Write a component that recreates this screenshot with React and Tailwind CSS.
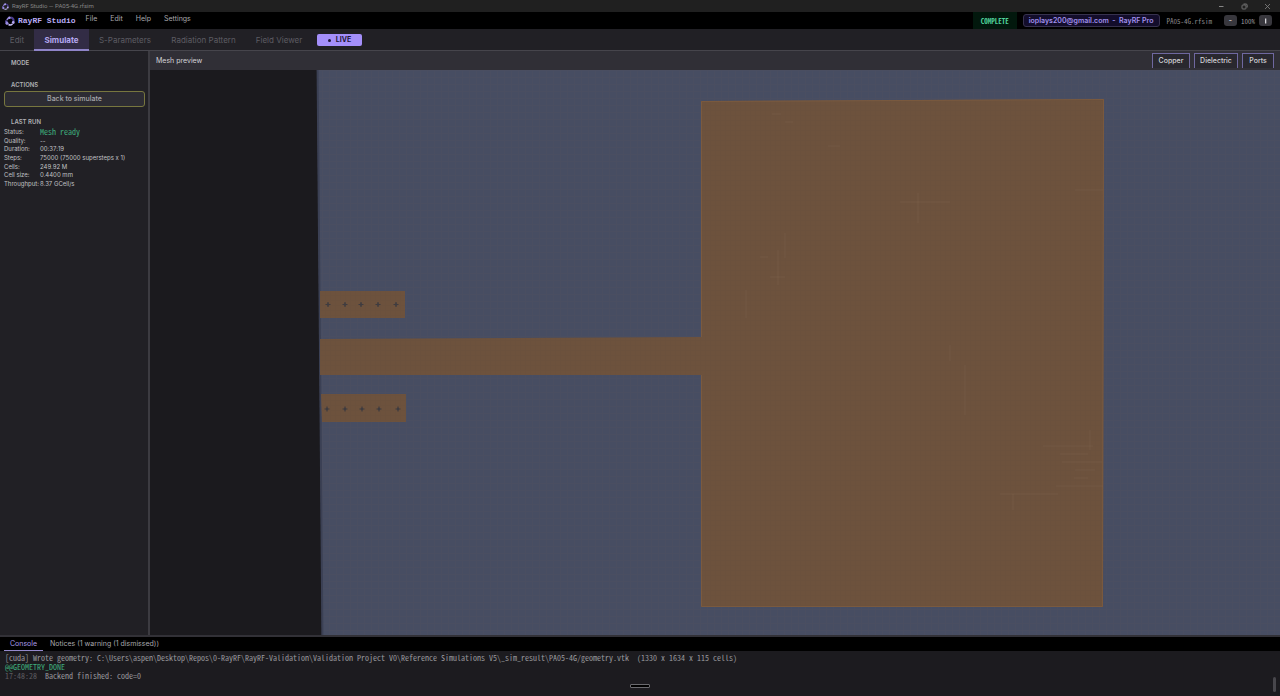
import { useState } from "react"

const menus = ["File", "Edit", "Help", "Settings"]

const lastRun = [
    ["Quality:", "--"],
    ["Duration:", "00:37:19"],
    ["Steps:", "75000 (75000 supersteps x 1)"],
    ["Cells:", "249.92 M"],
    ["Cell size:", "0.4400 mm"],
    ["Throughput:", "8.37 GCell/s"],
]

const upperVias = [328, 345, 361, 378, 396]
const lowerVias = [327, 345, 362, 379, 398]

function Logo({ className }) {
    return (
        <svg viewBox="0 0 20 20" className={className} fill="none">
            <path d="M4 8a7 7 0 0 1 6-5" stroke="#8b7fd0" strokeWidth="3.500" />
            <path d="M12 3a7 7 0 0 1 5 8" stroke="#4b3b8f" strokeWidth="4" />
            <path d="M15 16a7 7 0 0 1-8 1" stroke="#c9c0f5" strokeWidth="3" />
            <path d="M5 16a7 7 0 0 1-2-7" stroke="#6a5cb8" strokeWidth="4.500" />
            <circle cx="16.500" cy="13" r="2.800" fill="#b3a6f2" />
            <circle cx="4" cy="14.500" r="3" fill="#9a8ce0" />
            <circle cx="9" cy="3.500" r="2.600" fill="#a99bf0" />
        </svg>
    )
}

function TitleBar() {
    return (
        <div className="flex h-3 shrink-0 items-center justify-between bg-[#202020] pl-[2px] pr-[9px] text-[#858585]">
            <div className="flex items-center gap-[3px]">
                <Logo className="size-[7px]" />
                <span className="font-['Roboto',sans-serif] text-[6px] leading-[12px]">RayRF Studio — PA05-4G.rfsim</span>
            </div>
            <div className="flex items-center gap-4">
                <button aria-label="Minimize">
                    <svg viewBox="0 0 7 7" className="size-[7px]" stroke="currentColor"><path d="M1 3.500h4.500" /></svg>
                </button>
                <button aria-label="Restore">
                    <svg viewBox="0 0 7 7" className="size-[7px]" fill="none" stroke="currentColor" strokeWidth="0.800">
                        <rect x="1" y="2" width="4" height="4" rx="0.800" />
                        <path d="M2.500 1h2.500a1.200 1.200 0 0 1 1.200 1.200v2.300" />
                    </svg>
                </button>
                <button aria-label="Close">
                    <svg viewBox="0 0 7 7" className="size-[7px]" stroke="currentColor" strokeWidth="0.800"><path d="M1 1l5 5M6 1l-5 5" /></svg>
                </button>
            </div>
        </div>
    )
}

function MenuBar({ zoom, setZoom }) {
    return (
        <div className="flex h-[17px] shrink-0 items-center bg-black pl-[5px] pr-2">
            <Logo className="size-[10px]" />
            <h1 className="ml-[3px] font-['Liberation_Mono',monospace] text-[8px] font-bold leading-[12px] text-[#b9acf5]">RayRF Studio</h1>
            <nav className="ml-[10px] flex gap-[13px] pb-[3px]">
                {menus.map((m) => (
                    <button key={m} className="text-[7px] leading-[12px] text-[#a8a8ac]">{m}</button>
                ))}
            </nav>
            <div className="ml-auto flex h-full items-center">
                <span className="flex h-full items-center bg-[#02180d] px-2 font-['Noto_Sans_Mono_CJK_SC','Liberation_Mono',monospace] text-[7px] font-bold leading-[12px] text-[#4fd09a]">COMPLETE</span>
                <button className="ml-[6px] h-[13px] rounded-[3px] border border-[#37324e] bg-[#130d2b] px-[5px] text-[7px] font-semibold leading-[11px] text-[#a291ee]">
                    ioplays200@gmail.com &nbsp;-&nbsp; RayRF Pro
                </button>
                <span className="ml-[7px] font-['Noto_Sans_Mono_CJK_SC','Liberation_Mono',monospace] text-[7px] leading-[12px] text-[#8a8a8e]">PA05-4G.rfsim</span>
                <button aria-label="Zoom out" onClick={() => setZoom(zoom - 10)} className="ml-3 h-[11px] w-[13px] rounded-[3px] bg-[#38373d] text-[7px] font-bold leading-[11px] text-[#c8c8cc]">-</button>
                <span className="mx-1 font-['Noto_Sans_Mono_CJK_SC','Liberation_Mono',monospace] text-[7px] leading-[12px] text-[#9a9a9e]">{zoom}%</span>
                <button aria-label="Zoom in" onClick={() => setZoom(zoom + 10)} className="flex h-[11px] w-[13px] items-center justify-center rounded-[3px] bg-[#38373d] text-[#d8d8dc]">
                    <svg viewBox="0 0 5 7" className="h-[7px] w-[5px]" fill="currentColor"><path d="M2 1.500h1.300v5h-1.300z" /></svg>
                </button>
            </div>
        </div>
    )
}

function TabBar() {
    return (
        <div className="flex h-[22px] shrink-0 border-b border-[#46454c] bg-[#212025] text-[8px] leading-[22px] text-[#5d5c63]">
            <button className="w-[34px]">Edit</button>
            <button className="-mb-px w-[55px] border-b-2 border-[#8f84c8] bg-[#322c45] font-bold leading-[22px] text-[#b5a8f0]">Simulate</button>
            <button className="w-[72px]">S-Parameters</button>
            <button className="w-[85px]">Radiation Pattern</button>
            <button className="w-[66px]">Field Viewer</button>
            <button className="ml-[5px] mt-[5px] flex h-3 w-[45px] items-center justify-center gap-[5px] rounded-[2px] bg-[#a48ffa] text-[7px] font-bold leading-[12px] text-[#1d1638]">
                <span className="size-[3px] rounded-full bg-[#1d1638]" />
                LIVE
            </button>
        </div>
    )
}

function Sidebar() {
    return (
        <aside className="w-[150px] shrink-0 border-r-2 border-[#3c3b41] bg-[#212025] px-1 text-[#c0c0c4]">
            <h2 className="pl-[7px] pt-[6px] text-[6px] font-semibold leading-[12px] text-[#b0b0b4]">MODE</h2>
            <h2 className="pl-[7px] pt-[10px] text-[6px] font-semibold leading-[12px] text-[#b0b0b4]">ACTIONS</h2>
            <button className="block h-4 w-[141px] rounded-[3px] border border-[#77763f] bg-[#2d2c33] text-[7px] font-medium leading-[14px] text-[#a8a8ac]">Back to simulate</button>
            <h2 className="pl-[7px] pt-[9px] text-[6px] font-semibold leading-[12px] text-[#b0b0b4]">LAST RUN</h2>
            <dl className="grid h-[60px] grid-cols-[36px_1fr] items-center text-[6px] leading-[8px]">
                <dt>Status:</dt>
                <dd className="font-['Noto_Sans_Mono_CJK_SC','Liberation_Mono',monospace] text-[8px] leading-[8px] text-[#3fae7d]">Mesh ready</dd>
                {lastRun.map(([label, value]) => (
                    <div key={label} className="contents">
                        <dt className="whitespace-nowrap">{label}</dt>
                        <dd className="whitespace-nowrap">{value}</dd>
                    </div>
                ))}
            </dl>
        </aside>
    )
}

function Vias({ xs, y }) {
    return xs.map((x) => (
        <g key={x} stroke="#3f3c40" strokeWidth="1.200">
            <path d={`M${x - 2.5} ${y}h5M${x} ${y - 2.5}v5`} />
            <circle cx={x} cy={y} r="1.200" fill="#3f3c40" stroke="none" />
        </g>
    ))
}

function MeshView() {
    return (
        <svg viewBox="150 70 1130 565" preserveAspectRatio="xMidYMid slice" className="min-h-0 w-full flex-1 bg-[#1b1a1e]" role="img" aria-label="Mesh preview">
            <defs>
                <pattern id="substrateMesh" width="7" height="7" patternUnits="userSpaceOnUse">
                    <path d="M0 .5h7M.5 0v7" stroke="#4d4f5e" strokeWidth="1" opacity="0.400" />
                </pattern>
                <pattern id="copperMesh" width="5" height="5" patternUnits="userSpaceOnUse">
                    <path d="M0 .5h5M.5 0v5" stroke="#674e3c" strokeWidth="1" opacity="0.400" />
                </pattern>
            </defs>

            <path d="M317 60H1290V645H322Z" fill="#474d62" />
            <path d="M317 60H1290V645H322Z" fill="url(#substrateMesh)" />
            <path d="M317.500 60L322.500 645" stroke="#3b4054" strokeWidth="2" />

            <path d="M701 101L1104 99L1103 607H701V375H320V339L701 337ZM320 291H405V318H320ZM321 394H406V422H322Z" fill="#6d523d" />
            <path d="M701 101L1104 99L1103 607H701V375H320V339L701 337ZM320 291H405V318H320ZM321 394H406V422H322Z" fill="url(#copperMesh)" />
            <path d="M701.500 337V101.500L1103.500 99.500L1102.500 606.500H701.500V375" fill="none" stroke="#85603f" strokeWidth="0.600" />

            <g stroke="#80664f" strokeWidth="0.700" opacity="0.600">
                <path d="M772 114h9M785 122h8M828 146h12M1075 190h28M900 202h50M770 277h15M760 257h8" />
                <path d="M918 193v30M785 233v25M778 250v35M746 290v28M950 345v16M965 365v50M1090 430v20" />
                <path d="M1043 446h50M1060 454h28M1062 462h40M1075 470h20M1074 478h14M1056 486h47M1000 494h58M1013 494v16" />
            </g>

            <Vias xs={upperVias} y={304.5} />
            <Vias xs={lowerVias} y={409} />
        </svg>
    )
}

function Preview() {
    return (
        <main className="flex min-w-0 flex-1 flex-col">
            <div className="flex h-[19px] shrink-0 items-end justify-between bg-[#302f36] px-[6px] text-[7px] text-[#d4d4d8]">
                <h2 className="self-center text-[7px] leading-[12px]">Mesh preview</h2>
                <div className="flex gap-1 pb-[2px] leading-[14px]">
                    <button className="h-[15px] w-[38px] border border-b-0 border-[#6f68a0] bg-[#29282f] font-medium">Copper</button>
                    <button className="h-[15px] w-11 border border-b-0 border-[#6f68a0] bg-[#29282f] font-medium">Dielectric</button>
                    <button className="h-[15px] w-8 border border-b-0 border-[#6f68a0] bg-[#29282f] font-medium">Ports</button>
                </div>
            </div>
            <MeshView />
        </main>
    )
}

function Console() {
    return (
        <section className="shrink-0 border-t-2 border-[#323137] bg-[#1c1b1f]">
            <div className="flex h-[14px] bg-black pl-1 text-[7px] leading-[12px] text-[#a8a8ac]">
                <button className="w-[39px] border-b border-[#9489cc] text-[#a99ae8]">Console</button>
                <button className="ml-[7px] pb-px">Notices (1 warning (1 dismissed))</button>
            </div>
            <div className="relative h-[45px] overflow-hidden whitespace-pre px-[5px] pt-[2px] font-['Noto_Sans_Mono_CJK_SC','Liberation_Mono',monospace] text-[8px] leading-[9px] text-[#98989c]">
                <p>{"[cuda] Wrote geometry: C:\\Users\\aspen\\Desktop\\Repos\\0-RayRF\\RayRF-Validation\\Validation Project V0\\Reference Simulations V5\\_sim_result\\PA05-4G/geometry.vtk  (1330 x 1634 x 115 cells)"}</p>
                <p className="text-[#3fae7d]">@@GEOMETRY_DONE</p>
                <p><span className="text-[#5c5c60]">17:48:28</span>{"  Backend finished: code=0"}</p>
                <div className="absolute bottom-2 left-1/2 h-1 w-5 -translate-x-1/2 rounded-[1px] border border-[#6a6a6e] bg-black" />
                <div className="absolute bottom-1 right-1 h-[15px] w-[3px] rounded-full bg-[#48474c]" />
            </div>
        </section>
    )
}

export default function App() {
    const [zoom, setZoom] = useState(100)

    return (
        <div className="flex h-screen flex-col overflow-hidden bg-[#1c1b1f] font-['Inter',sans-serif]">
            <TitleBar />
            <MenuBar zoom={zoom} setZoom={setZoom} />
            <TabBar />
            <div className="flex min-h-0 flex-1">
                <Sidebar />
                <Preview />
            </div>
            <Console />
        </div>
    )
}
